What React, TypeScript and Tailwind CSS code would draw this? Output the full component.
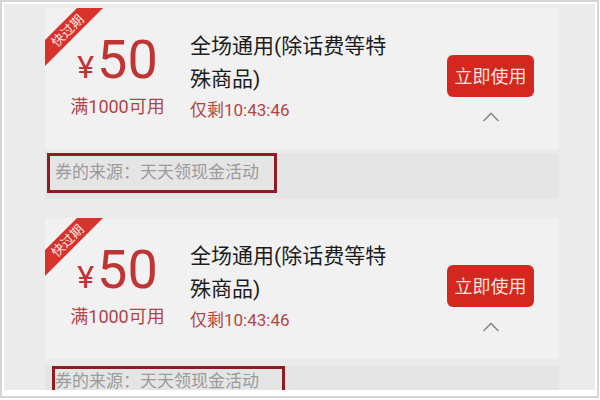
const CJK = "font-['Roboto','Noto_Sans_CJK_SC',sans-serif]"

type Box = { ml: string; w: string; mt: string; pl: string; pt: string }

const BOXES: Box[] = [
  { ml: 'ml-[2px]', w: 'w-[230px]', mt: 'mt-[4px]', pl: 'pl-[5px]', pt: 'pt-[4px]' },
  { ml: 'ml-[7px]', w: 'w-[233px]', mt: 'mt-[7px]', pl: 'pl-0', pt: 'pt-0' },
]

function Ribbon() {
  return (
    <svg className="absolute left-0 top-0" width="60" height="60" viewBox="0 0 60 60">
      <polygon points="0,32 32,0 58,0 0,58" fill="#d7322c" />
      <text
        x="22"
        y="22"
        transform="rotate(-45 22 22)"
        textAnchor="middle"
        dominantBaseline="central"
        fontSize="13"
        fill="#fbe6e2"
        fontFamily="Noto Sans CJK SC, sans-serif"
      >
        快过期
      </text>
    </svg>
  )
}

function Coupon({ box }: { box: Box }) {
  return (
    <div className="w-full">
      {/* 券面 */}
      <div className="relative flex h-[141px] bg-[#f2f1f2]">
        <Ribbon />
        <div className="flex w-[145px] shrink-0 flex-col items-center pt-[25px]">
          <div className="flex items-baseline leading-none text-[#bf3534]">
            <span className="mr-[3px] text-[32px] font-['Roboto','Noto_Sans_CJK_SC',sans-serif]">¥</span>
            <span className="text-[54px] font-['Roboto',sans-serif]">50</span>
          </div>
          <div className={`mt-[9px] text-[18px] leading-[22px] text-[#ad4646] ${CJK}`}>满1000可用</div>
        </div>
        <div className={`flex-1 pt-[22px] ${CJK}`}>
          <div className="w-[215px] text-[21px] leading-[33px] text-[#1c1c1c]">全场通用(除话费等特殊商品)</div>
          <div className="mt-[3px] text-[17px] leading-[22px] text-[#b44545]">仅剩10:43:46</div>
        </div>
        <div className="mr-[25px] flex w-[87px] flex-col items-center pt-[47px]">
          <button className={`h-[42px] w-[87px] rounded-[6px] bg-[#d3271f] text-[18px] text-[#fbe4de] ${CJK}`}>
            立即使用
          </button>
          <svg className="mt-[15px]" width="18" height="10" viewBox="0 0 18 10" fill="none">
            <path d="M1.5 9 L9 1.5 L16.5 9" stroke="#8a8a8a" strokeWidth="1.6" />
          </svg>
        </div>
      </div>
      {/* 来源 */}
      <div className="h-[46px] bg-[#e6e5e6]">
        <div
          className={`${box.mt} ${box.ml} ${box.w} ${box.pl} ${box.pt} h-[40px] border-[3px] border-[#8e1c22] text-[17px] leading-[24px] text-[#9b9b9b] ${CJK}`}
        >
          券的来源：天天领现金活动
        </div>
      </div>
    </div>
  )
}

export default function App() {
  return (
    <div className="h-[400px] w-[600px] bg-white">
      <div className="h-[398px] w-[599px] border-2 border-[#d5d5d5] bg-white p-[2px] pb-[6px]">
        <div className="flex h-full flex-col gap-[19px] overflow-hidden bg-[#ebebeb] pl-[41px] pr-[36px] pt-[4px]">
          {BOXES.map((b, i) => (
            <Coupon key={i} box={b} />
          ))}
        </div>
      </div>
    </div>
  )
}
